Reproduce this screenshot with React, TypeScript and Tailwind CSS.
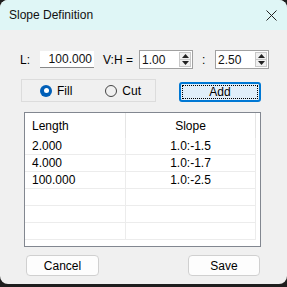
import React from "react";

const FONT = { fontFamily: '"Liberation Sans", Arial, sans-serif' };

const ROWS = [
  { length: "2.000", slope: "1.0:-1.5" },
  { length: "4.000", slope: "1.0:-1.7" },
  { length: "100.000", slope: "1.0:-2.5" },
  { length: "", slope: "" },
  { length: "", slope: "" },
  { length: "", slope: "" },
];

function Spin() {
  return (
    <div className="flex flex-col w-[12px] h-[15px] border border-[#c8c8c8] bg-[#f0f0f0]">
      <div className="flex-1 flex items-center justify-center border-b border-[#c8c8c8]">
        <svg width="7" height="4" viewBox="0 0 7 4"><path d="M0 4 L3.5 0 L7 4 Z" fill="#222" /></svg>
      </div>
      <div className="flex-1 flex items-center justify-center">
        <svg width="7" height="4" viewBox="0 0 7 4"><path d="M0 0 L3.5 4 L7 0 Z" fill="#222" /></svg>
      </div>
    </div>
  );
}

function SpinInput({ value }: { value: string }) {
  return (
    <div className="flex items-center w-[54px] h-[19px] bg-white border border-[#a0a0a0] pl-[2px] pr-[1px]">
      <span className="flex-1 text-[12px] leading-none text-[#111]">{value}</span>
      <Spin />
    </div>
  );
}

export default function App() {
  return (
    <div className="w-[287px] h-[287px] bg-[#1e1e1e] text-[12px] text-black" style={FONT}>
      <div className="h-[284px] rounded-[8px] overflow-hidden bg-[#f0f0f0] flex flex-col">
        {/* Title bar */}
        <div className="h-[30px] bg-[#dff6f6] flex items-center justify-between pl-[9px] pr-[9px]">
          <span className="text-[12px] text-[#111]">Slope Definition</span>
          <svg width="11" height="11" viewBox="0 0 11 11" className="mr-[1px]">
            <path d="M0.5 0.5 L10.5 10.5 M10.5 0.5 L0.5 10.5" stroke="#222" strokeWidth="1" />
          </svg>
        </div>

        {/* Row 1 */}
        <div className="flex items-center h-[19px] mt-[20px] pl-[20px]">
          <span className="w-[20px]">L:</span>
          <div className="w-[54px] h-[17px] bg-white border-b border-[#888] flex items-center justify-end pr-[2px] text-[#111]">
            100.000
          </div>
          <span className="ml-[9px] w-[36px]">V:H =</span>
          <SpinInput value="1.00" />
          <span className="ml-[9px] w-[13px]">:</span>
          <SpinInput value="2.50" />
        </div>

        {/* Row 2 */}
        <div className="flex items-start mt-[10px] pl-[21px]">
          <div className="w-[135px] h-[23px] border border-[#dcdcdc] flex items-center">
            <div className="flex items-center ml-[18px]">
              <div className="w-[12px] h-[12px] rounded-full bg-[#005fb8] flex items-center justify-center">
                <div className="w-[5px] h-[5px] rounded-full bg-white" />
              </div>
              <span className="ml-[5px]">Fill</span>
            </div>
            <div className="flex items-center ml-[33px]">
              <div className="w-[12px] h-[12px] rounded-full border border-[#444]" />
              <span className="ml-[5px]">Cut</span>
            </div>
          </div>
          <div className="ml-[23px] mt-[3px] w-[82px] h-[20px] rounded-[3px] border-2 border-[#0078d4] bg-[#e0eef9] p-[1px]">
            <div className="w-full h-full border border-dotted border-black flex items-center justify-center">
              Add
            </div>
          </div>
        </div>

        {/* List view */}
        <div className="ml-[24px] mt-[10px] w-[237px] h-[135px] bg-white border border-[#828790] overflow-hidden">
          <div className="flex h-[25px] items-center">
            <div className="w-[101px] h-full pl-[7px] flex items-center border-r border-[#e5e5e5]">Length</div>
            <div className="w-[130px] h-full flex items-center justify-center border-r border-[#e5e5e5]">Slope</div>
          </div>
          {ROWS.map((r, i) => (
            <div key={i} className="flex h-[17px] border-b border-[#ececec] w-[231px]">
              <div className="w-[101px] pl-[7px] flex items-center border-r border-[#ececec]">{r.length}</div>
              <div className="w-[130px] flex items-center justify-center border-r border-[#ececec]">{r.slope}</div>
            </div>
          ))}
        </div>

        {/* Buttons */}
        <div className="flex justify-between mt-[8px] pl-[26px] pr-[27px]">
          <div className="w-[73px] h-[21px] rounded-[4px] border border-[#d0d0d0] bg-[#fdfdfd] flex items-center justify-center">
            Cancel
          </div>
          <div className="w-[72px] h-[21px] rounded-[4px] border border-[#d0d0d0] bg-[#fdfdfd] flex items-center justify-center">
            Save
          </div>
        </div>
      </div>
    </div>
  );
}
